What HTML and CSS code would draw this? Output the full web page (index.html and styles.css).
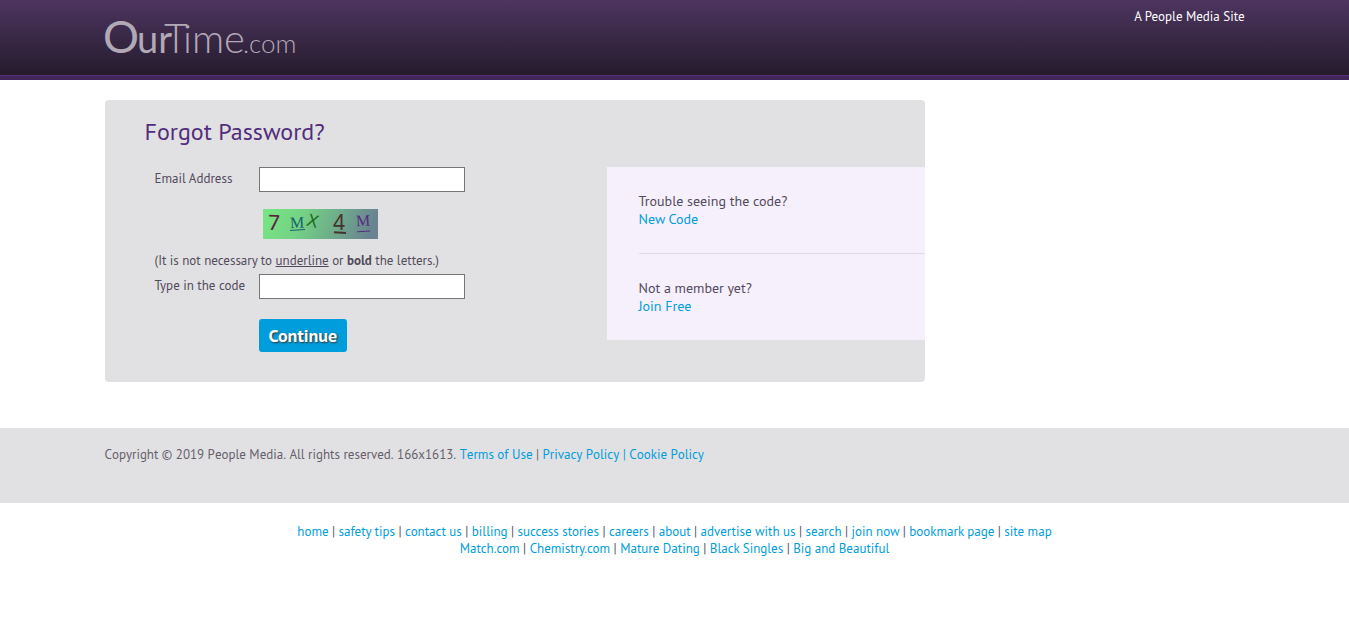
FILE: index.html
```
<!DOCTYPE html>
<html lang="en">
<head>
<meta charset="utf-8">
<title>OurTime.com - Forgot Password</title>
<link rel="stylesheet" href="styles.css">
</head>
<body>
<header class="site-header">
  <div class="container header-inner">
    <a class="logo" href="#" aria-label="OurTime.com">
      <svg width="190" height="40" viewBox="0 0 190 40" fill="#b2a9b6" font-family="Lato, sans-serif">
        <text x="-2" y="36" font-size="45"><tspan>O</tspan><tspan x="32" font-size="38">ur</tspan><tspan x="59" font-size="41" font-weight="300">T</tspan><tspan x="78" font-size="40" font-weight="300">ime</tspan><tspan x="138" font-size="26" font-weight="300">.com</tspan></text>
      </svg>
    </a>
    <span class="tagline">A People Media Site</span>
  </div>
</header>

<main class="container">
  <section class="panel">
    <h1 class="title">Forgot Password?</h1>
    <div class="columns">
      <form class="form">
        <label class="label" for="email">Email Address</label>
        <input class="field" id="email" type="email">
        <svg class="captcha" width="115" height="30" viewBox="0 0 115 30" role="img" aria-label="Security code">
          <defs>
            <linearGradient id="captcha-bg" x1="0" y1="0" x2="1" y2="0.1">
              <stop offset="0" stop-color="#78e683"/>
              <stop offset="0.35" stop-color="#74d385"/>
              <stop offset="1" stop-color="#698490"/>
            </linearGradient>
          </defs>
          <rect width="115" height="30" fill="url(#captcha-bg)"/>
          <text x="5" y="21" font-family="Noto Sans, sans-serif" font-size="21" fill="#5a2440" transform="rotate(2 10 14)">7</text>
          <text x="27" y="19" font-family="Liberation Serif, serif" font-size="16" fill="#17616b" transform="rotate(-3 34 14)">M</text>
          <path d="M27 21.5L42 20.5" stroke="#17616b"/>
          <text x="44" y="18" font-family="DejaVu Sans, sans-serif" font-size="17" fill="#226f1d" transform="rotate(16 50 12)">X</text>
          <text x="70" y="21" font-family="Noto Sans, sans-serif" font-size="21" fill="#46342c">4</text>
          <path d="M71 23.3L83 23.9" stroke="#46342c" stroke-width="2"/>
          <text x="93" y="17" font-family="Liberation Serif, serif" font-size="16" fill="#552c83" transform="rotate(-3 99 12)">M</text>
          <path d="M94 22.8L107 22" stroke="#552c83"/>
        </svg>
        <p class="note">(It is not necessary to <u>underline</u> or <b>bold</b> the letters.)</p>
        <label class="label" for="code">Type in the code</label>
        <input class="field" id="code" type="text">
        <button class="continue" type="submit">Continue</button>
      </form>
      <aside class="help">
        <div class="help-item">
          <div>Trouble seeing the code?</div>
          <a href="#">New Code</a>
        </div>
        <div class="help-item">
          <div>Not a member yet?</div>
          <a href="#">Join Free</a>
        </div>
      </aside>
    </div>
  </section>
</main>

<footer>
  <div class="legal">
    <div class="container">Copyright © 2019 People Media. All rights reserved. 166x1613. <a href="#">Terms of Use</a> | <a href="#">Privacy Policy</a> <a href="#">| Cookie Policy</a></div>
  </div>
  <nav class="links">
    <div><a href="#">home</a> | <a href="#">safety tips</a> | <a href="#">contact us</a> | <a href="#">billing</a> | <a href="#">success stories</a> | <a href="#">careers</a> | <a href="#">about</a> | <a href="#">advertise with us</a> | <a href="#">search</a> | <a href="#">join now</a> | <a href="#">bookmark page</a> | <a href="#">site map</a></div>
    <div><a href="#">Match.com</a> | <a href="#">Chemistry.com</a> | <a href="#">Mature Dating</a> | <a href="#">Black Singles</a> | <a href="#">Big and Beautiful</a></div>
  </nav>
</footer>
</body>
</html>
```
FILE: styles.css
```
* {
  box-sizing: border-box;
}

body {
  margin: 0;
  background: #fff;
  color: #534b5c;
  font: 13px/17px "PT Sans", "Noto Sans", sans-serif;
}

a {
  color: #009ddc;
  text-decoration: none;
}

.container {
  max-width: 1140px;
  margin: 0 auto;
}

.site-header {
  background: linear-gradient(#4e3560, #241b2c);
  border-bottom: 4px solid #41265c;
  box-shadow: inset 0 -1px #5b2d80;
}

.header-inner {
  display: flex;
  justify-content: space-between;
  align-items: flex-start;
  padding: 8px 0 19px;
}

.logo {
  padding-top: 9px;
}

.logo svg {
  display: block;
  overflow: visible;
}

.tagline {
  color: #fff;
}

.panel {
  max-width: 820px;
  margin: 20px 0 46px;
  padding: 16px 0 30px 40px;
  background: #e1e1e3;
  border-radius: 4px;
}

.title {
  margin: 0 0 19px;
  color: #522d7b;
  font-size: 24px;
  line-height: 32px;
  font-weight: 400;
}

.columns {
  display: flex;
  justify-content: space-between;
  align-items: flex-start;
}

.form {
  display: grid;
  grid-template-columns: 104px 206px;
  justify-items: start;
  padding-left: 10px;
}

.label {
  padding-top: 3px;
}

.field {
  width: 206px;
  height: 25px;
  padding: 2px 4px;
  border: 1px solid #767676;
  background: #fff;
  font: inherit;
}

.captcha {
  grid-column: 2;
  margin: 17px 0 13px 4px;
}

.note {
  grid-column: 1 / -1;
  margin: 0 0 5px;
}

.continue {
  grid-column: 2;
  height: 33px;
  margin-top: 20px;
  padding: 0 10px;
  border: 0;
  border-radius: 3px;
  background: #009ddc;
  color: #fff;
  font: bold 18px/24px "PT Sans", "Noto Sans", sans-serif;
  text-shadow: 1px 1px 2px #333;
}

.help {
  width: 318px;
  padding-left: 32px;
  background: #f6f0fd;
  font-size: 14px;
  line-height: 18px;
}

.help-item {
  padding: 25px 0;
}

.help-item + .help-item {
  border-top: 1px solid #e1dbe8;
}

.legal {
  padding: 18px 0 40px;
  background: #e1e1e3;
  color: #665f6b;
  font-kerning: none;
}

.links {
  padding: 20px 0;
  text-align: center;
}
```
